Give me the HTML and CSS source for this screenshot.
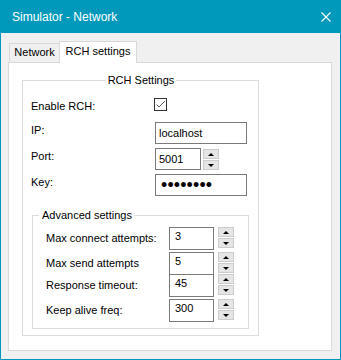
FILE: index.html
```html
<!DOCTYPE html>
<html lang="en">

<head>
    <meta charset="UTF-8">
    <meta name="viewport" content="width=device-width, initial-scale=1.0">
    <title>Simulator - Network</title>
    <link rel="stylesheet" href="styles.css">
</head>

<body>
    <div class="window">
        <div class="titlebar">
            <span class="title">Simulator - Network</span>
            <svg class="close" width="10" height="10" viewBox="0 0 10 10">
                <path d="M0.5 0.5L9.5 9.5M9.5 0.5L0.5 9.5" stroke="#ffffff" stroke-width="1.1" fill="none" />
            </svg>
        </div>

        <div class="client">
            <div class="tabs">
                <div class="tab">Network</div>
                <div class="tab active">RCH settings</div>
            </div>

            <div class="panel">
                <fieldset class="group main">
                    <legend>RCH Settings</legend>

                    <div class="form">
                        <label class="lbl">Enable RCH:</label>
                        <span class="check">
                            <svg width="11" height="11" viewBox="0 0 11 11">
                                <path d="M1.5 5.5L4 8L10 2" stroke="#5a5a5a" stroke-width="1" fill="none" />
                            </svg>
                        </span>

                        <label class="lbl">IP:</label>
                        <div class="textbox wide">localhost</div>

                        <label class="lbl">Port:</label>
                        <div class="spin">
                            <div class="textbox port">5001</div>
                            <div class="spinbtns small">
                                <span class="btn up"></span>
                                <span class="btn down"></span>
                            </div>
                        </div>

                        <label class="lbl">Key:</label>
                        <div class="textbox wide pwd">&bull;&bull;&bull;&bull;&bull;&bull;&bull;&bull;</div>
                    </div>

                    <!-- Advanced settings -->
                    <fieldset class="group adv">
                        <legend>Advanced settings</legend>

                        <div class="adv-form">
                            <label class="lbl">Max connect attempts:</label>
                            <div class="spin">
                                <div class="textbox num">3</div>
                                <div class="spinbtns">
                                    <span class="btn up"></span>
                                    <span class="btn down"></span>
                                </div>
                            </div>

                            <label class="lbl">Max send attempts</label>
                            <div class="spin">
                                <div class="textbox num">5</div>
                                <div class="spinbtns">
                                    <span class="btn up"></span>
                                    <span class="btn down"></span>
                                </div>
                            </div>

                            <label class="lbl">Response timeout:</label>
                            <div class="spin">
                                <div class="textbox num">45</div>
                                <div class="spinbtns">
                                    <span class="btn up"></span>
                                    <span class="btn down"></span>
                                </div>
                            </div>

                            <label class="lbl">Keep alive freq:</label>
                            <div class="spin">
                                <div class="textbox num">300</div>
                                <div class="spinbtns">
                                    <span class="btn up"></span>
                                    <span class="btn down"></span>
                                </div>
                            </div>
                        </div>
                    </fieldset>
                </fieldset>
            </div>
        </div>
    </div>
</body>

</html>
```

FILE: styles.css
```css
* {
    box-sizing: border-box;
}

body {
    margin: 0;
    padding: 0;
    font-family: 'Liberation Sans', Arial, sans-serif;
    font-size: 11px;
    color: #000000;
    background-color: #ffffff;
}

.window {
    width: 341px;
    height: 360px;
    border: 1px solid #0099bc;
    border-top: none;
    background-color: #f0f0f0;
}

/* Title bar */
.titlebar {
    height: 33px;
    background-color: #0099bc;
    display: flex;
    align-items: center;
    justify-content: space-between;
    padding: 0 9px 0 11px;
}

.title {
    color: #ffffff;
    font-size: 12px;
}

.close {
    display: block;
}

/* Client area */
.client {
    padding: 8px 8px 8px 7px;
}

.tabs {
    display: flex;
    align-items: flex-end;
    height: 22px;
    padding-left: 1px;
}

.tab {
    height: 19px;
    width: 50px;
    margin-bottom: 1px;
    border: 1px solid #d9d9d9;
    border-right: none;
    border-bottom: none;
    background-color: #f0f0f0;
    text-align: center;
    line-height: 17px;
}

.tab.active {
    position: relative;
    z-index: 1;
    height: 22px;
    width: 78px;
    margin-bottom: 0;
    border-right: 1px solid #d9d9d9;
    background-color: #ffffff;
    line-height: 19px;
}

.panel {
    height: 289px;
    margin-top: -1px;
    border: 1px solid #d9d9d9;
    background-color: #ffffff;
    padding: 11px 0 0 13px;
}

/* Group boxes */
.group {
    margin: 0;
    padding: 0;
    border: 1px solid #dcdcdc;
    min-width: 0;
}

.group legend {
    padding: 0 2px 0 3px;
    line-height: 13px;
}

.main {
    width: 237px;
    padding-bottom: 6px;
}

.main > legend {
    margin: 0 auto;
}

.form {
    display: grid;
    grid-template-columns: 124px auto;
    grid-template-rows: 24px 26px 26px 23px;
    margin-top: 11px;
    padding-left: 8px;
}

.lbl {
    padding-top: 2px;
    line-height: 13px;
}

.check {
    width: 13px;
    height: 13px;
    margin-left: -1px;
    border: 1px solid #333333;
    background-color: #ffffff;
    display: flex;
    align-items: center;
    justify-content: center;
}

.textbox {
    height: 22px;
    border: 1px solid #7a7a7a;
    background-color: #ffffff;
    padding-left: 3px;
    line-height: 20px;
}

.textbox.wide {
    width: 92px;
}

.pwd {
    font-size: 18px;
    letter-spacing: 0.1px;
    padding-left: 5px;
}

.spin {
    display: flex;
    align-items: flex-start;
}

.textbox.port {
    width: 46px;
}

.spinbtns {
    display: flex;
    flex-direction: column;
    gap: 1px;
    margin-left: 4px;
}

.spinbtns.small {
    margin-left: 2px;
    margin-top: 1px;
}

.btn {
    width: 16px;
    height: 10px;
    border: 1px solid #cccccc;
    background-color: #e5e5e5;
    display: flex;
    align-items: center;
    justify-content: center;
}

.btn::after {
    content: "";
    border-left: 3px solid transparent;
    border-right: 3px solid transparent;
}

.btn.up::after {
    border-bottom: 3px solid #000000;
}

.btn.down::after {
    border-top: 3px solid #000000;
}

/* Advanced settings */
.adv {
    margin: 12px 9px 0 9px;
    padding-bottom: 6px;
}

.adv > legend {
    margin-left: 6px;
}

.adv-form {
    display: grid;
    grid-template-columns: 123px auto;
    grid-template-rows: 25px 22px 25px 23px;
    margin-top: 5px;
    padding-left: 13px;
}

.adv-form .lbl {
    padding-top: 5px;
}

.textbox.num {
    width: 45px;
    height: 23px;
    padding-left: 5px;
    line-height: 17px;
}
```
